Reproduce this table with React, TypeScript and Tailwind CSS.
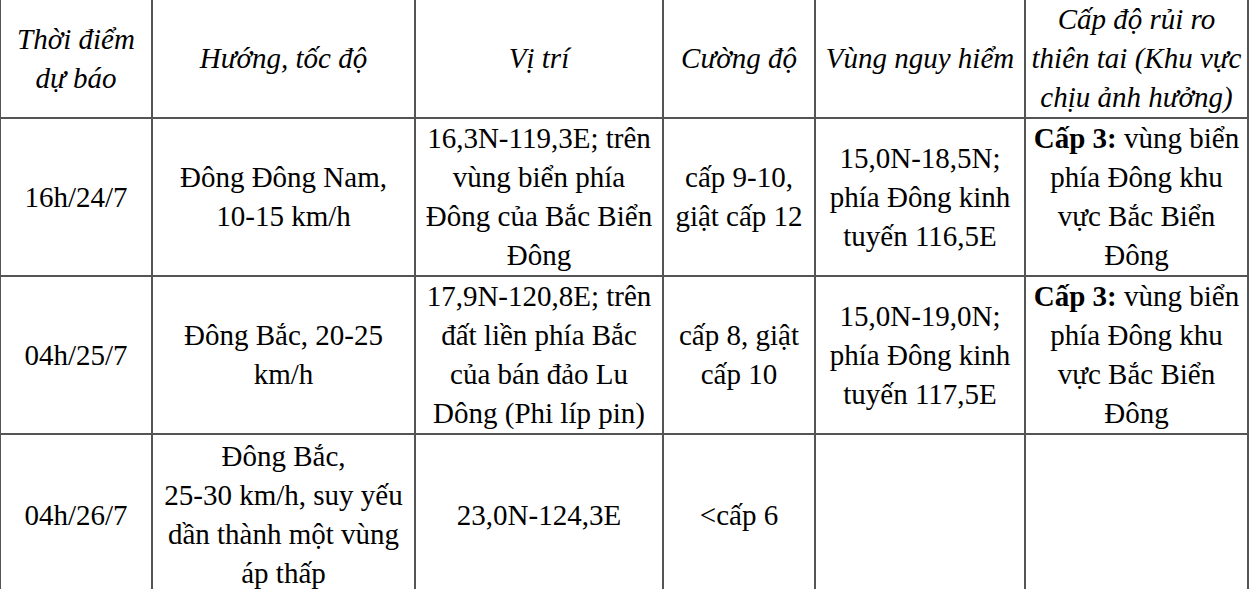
const header = [
  ["Thời điểm", "dự báo"],
  ["Hướng, tốc độ"],
  ["Vị trí"],
  ["Cường độ"],
  ["Vùng nguy hiểm"],
  ["Cấp độ rủi ro", "thiên tai (Khu vực", "chịu ảnh hưởng)"],
];

type Cell = { lines: string[]; bold?: string };

const rows: { h: string; cells: Cell[] }[] = [
  {
    h: "h-[156px]",
    cells: [
      { lines: ["16h/24/7"] },
      { lines: ["Đông Đông Nam,", "10-15 km/h"] },
      { lines: ["16,3N-119,3E; trên", "vùng biển phía", "Đông của Bắc Biển", "Đông"] },
      { lines: ["cấp 9-10,", "giật cấp 12"] },
      { lines: ["15,0N-18,5N;", "phía Đông kinh", "tuyến 116,5E"] },
      { bold: "Cấp 3:", lines: [" vùng biển", "phía Đông khu", "vực Bắc Biển", "Đông"] },
    ],
  },
  {
    h: "h-[156px]",
    cells: [
      { lines: ["04h/25/7"] },
      { lines: ["Đông Bắc, 20-25", "km/h"] },
      { lines: ["17,9N-120,8E; trên", "đất liền phía Bắc", "của bán đảo Lu", "Dông (Phi líp pin)"] },
      { lines: ["cấp 8, giật", "cấp 10"] },
      { lines: ["15,0N-19,0N;", "phía Đông kinh", "tuyến 117,5E"] },
      { bold: "Cấp 3:", lines: [" vùng biển", "phía Đông khu", "vực Bắc Biển", "Đông"] },
    ],
  },
  {
    h: "h-[160px]",
    cells: [
      { lines: ["04h/26/7"] },
      { lines: ["Đông Bắc,", "25-30 km/h, suy yếu", "dần thành một vùng", "áp thấp"] },
      { lines: ["23,0N-124,3E"] },
      { lines: ["<cấp 6"] },
      { lines: [] },
      { lines: [] },
    ],
  },
];

function CellBox({ cell, h }: { cell: Cell; h: string }) {
  return (
    <div className={`${h} bg-white flex items-center justify-center text-center overflow-hidden`}>
      <div>
        {cell.lines.map((line, i) => (
          <div key={i} className="whitespace-pre">
            {i === 0 && cell.bold && <b>{cell.bold}</b>}
            {line}
          </div>
        ))}
      </div>
    </div>
  );
}

export default function App() {
  return (
    <div className="w-[1249px] h-[589px] overflow-hidden bg-white">
      <div className="-ml-[1px] -mt-[2px] w-[1250px] grid grid-cols-[150px_261px_246px_150px_208px_221px] gap-[2px] p-[2px] bg-[#555] text-black text-[29px] leading-[39px] font-['Liberation_Serif','Times_New_Roman',serif]">
        {header.map((lines, i) => (
          <div key={i} className="h-[117px] bg-white flex items-center justify-center text-center italic overflow-hidden">
            <div>
              {lines.map((l, j) => (
                <div key={j} className="whitespace-nowrap">{l}</div>
              ))}
            </div>
          </div>
        ))}
        {rows.map((row, r) =>
          row.cells.map((cell, c) => <CellBox key={`${r}-${c}`} cell={cell} h={row.h} />)
        )}
      </div>
    </div>
  );
}
